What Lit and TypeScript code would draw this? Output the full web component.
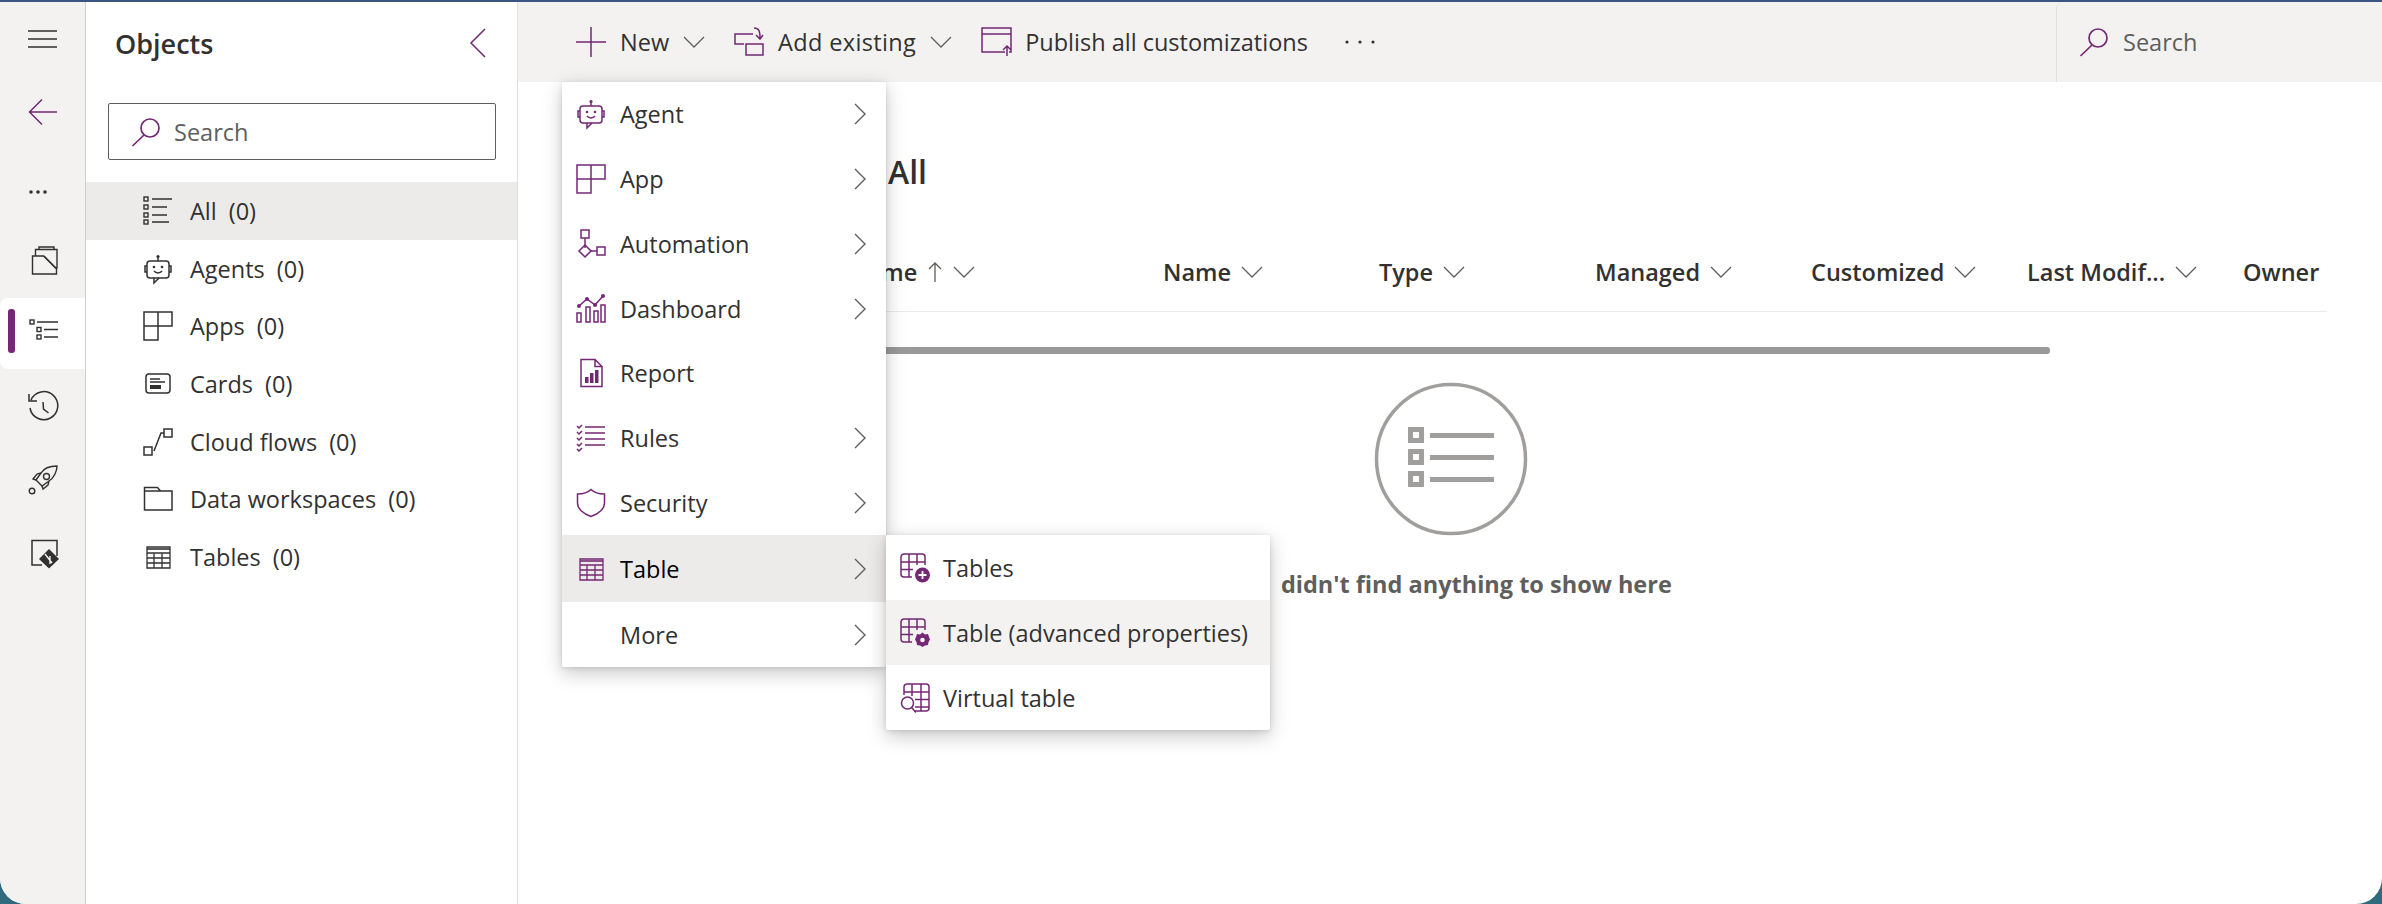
import { LitElement, html, css, svg } from 'lit';
import { customElement } from 'lit/decorators.js';

const P = '#742774';
const D = '#323130';

// every icon is drawn on a 30x30 box, stroke colour comes from currentColor
const icons: Record<string, unknown> = {
  hamburger: svg`<path d="M0 7h29M0 15h29M0 23h29" fill="none" stroke="currentColor" stroke-width="1.6"/>`,
  back: svg`<path d="M29 14H2M14 1.500 1.500 14 14 26.500" fill="none" stroke="currentColor" stroke-width="1.5"/>`,
  collapse: svg`<path d="M22 1 8 15l14 14" fill="none" stroke="currentColor" stroke-width="1.5"/>`,
  search: svg`<circle cx="19" cy="11" r="9" fill="none" stroke="currentColor" stroke-width="1.7"/><path d="M13 18 1.500 29" fill="none" stroke="currentColor" stroke-width="1.7"/>`,
  dots: svg`<circle cx="3" cy="15" r="1.8" fill="currentColor"/><circle cx="10" cy="15" r="1.8" fill="currentColor"/><circle cx="17" cy="15" r="1.8" fill="currentColor"/>`,
  dotsWide: svg`<circle cx="2" cy="15" r="1.6" fill="currentColor"/><circle cx="15" cy="15" r="1.6" fill="currentColor"/><circle cx="28" cy="15" r="1.6" fill="currentColor"/>`,
  solution: svg`<g fill="none" stroke="currentColor" stroke-width="1.400"><path d="M4.500 28V10h11l13 12.500V28ZM7.500 10V3.500h21.500v19M11 3.500V1h15v2.500"/><path d="M16 10l12 12.500"/></g>`,
  objects: svg`<g fill="none" stroke="currentColor" stroke-width="1.400"><rect x="2" y="1" width="4" height="4"/><rect x="9" y="8.500" width="4" height="4"/><rect x="9" y="16" width="4" height="4"/><path d="M9 3h21M16 10.500h14M16 18h14"/></g>`,
  history: svg`<path d="M3 9a14 14 0 1 1-1 8M1 3v7h8M15 11l.5 7 5 4" fill="none" stroke="currentColor" stroke-width="1.500"/>`,
  rocket: svg`<g fill="none" stroke="currentColor" stroke-width="1.400"><path d="M29 1c-6 0-13 2-16 7l-5 7 6 6 7-5c5-3 8-10 8-15Z"/><circle cx="18.500" cy="11.500" r="3"/><path d="M8 15l-3-1 4-5 4-1M14 21l1 3 5-4 1-4"/><circle cx="4" cy="26" r="2.800"/></g>`,
  git: svg`<path d="M29 17V1.500H4V26h10" fill="none" stroke="currentColor" stroke-width="1.500"/><path d="M21 10 31 20 21 29.500 11 20Z" fill="currentColor"/><path d="M17 15l7 9M22 17v8" stroke="#f3f2f1" stroke-width="1.400" fill="none"/>`,
  all: svg`<g fill="none" stroke="currentColor" stroke-width="1.400"><rect x="1" y="1" width="4" height="4"/><rect x="1" y="9" width="4" height="4"/><rect x="1" y="17" width="4" height="4"/><rect x="1" y="24" width="4" height="4"/><path d="M9 3h20M9 11h15M9 19h15M9 26h17"/></g>`,
  agent: svg`<g fill="none" stroke="currentColor" stroke-width="1.500"><rect x="4" y="7" width="22" height="17" rx="3"/><path d="M15 3v4M4 12H2v6h2M26 12h2v6h-2M11 24v5l5-5"/><path d="M11 17c2 2.500 6 2.500 8 0"/></g><circle cx="15" cy="2.500" r="1.600" fill="currentColor"/><circle cx="11" cy="13" r="1.300" fill="currentColor"/><circle cx="19" cy="13" r="1.300" fill="currentColor"/>`,
  apps: svg`<path d="M1 1h28v14H15v14H1ZM15 1v14M1 15h14" fill="none" stroke="currentColor" stroke-width="1.500"/>`,
  cards: svg`<rect x="3" y="5" width="24" height="19" rx="3" fill="none" stroke="currentColor" stroke-width="1.500"/><path d="M7 10h10M7 13h15" stroke="currentColor" stroke-width="1.300"/><rect x="7" y="16" width="11" height="4" fill="currentColor"/>`,
  flows: svg`<g fill="none" stroke="currentColor" stroke-width="1.500"><rect x="1" y="20" width="8" height="8"/><rect x="21" y="2" width="8" height="8"/><path d="M11 24 18 6h3"/></g>`,
  folder: svg`<path d="M1.500 3.500h13l3 3.500H29v19H1.500ZM1.500 7h16" fill="none" stroke="currentColor" stroke-width="1.500"/>`,
  table: svg`<path d="M4 5h23v21H4ZM4 11h23M4 16h23M4 21h23M11 11v15M19 11v15" fill="none" stroke="currentColor" stroke-width="1.300"/><path d="M4 7h23" stroke="currentColor" stroke-width="1.600"/>`,
  addExisting: svg`<g fill="none" stroke="currentColor" stroke-width="1.500"><path d="M10 17H1V7h18"/><rect x="12" y="17" width="17" height="11"/><path d="M20 1c5 0 6 3 6 10M22 8l4 4 3-4"/></g>`,
  plus: svg`<path d="M15 0v30M0 15h30" fill="none" stroke="currentColor" stroke-width="1.500"/>`,
  publish: svg`<g fill="none" stroke="currentColor" stroke-width="1.500"><path d="M24 25H1V1h29v24h-2M1 7h29M26 29V19M22 23l4-4 4 4"/></g>`,
  automation: svg`<g fill="none" stroke="currentColor" stroke-width="1.500"><rect x="5" y="1" width="8" height="8"/><path d="M9 9v10"/><path d="M9 19l6 6-6 6-6-6Z" transform="translate(0 -3)"/><path d="M15 22h6"/><rect x="21" y="18" width="8" height="8"/></g>`,
  dashboard: svg`<g fill="none" stroke="currentColor" stroke-width="1.500"><rect x="1" y="19" width="4" height="9"/><rect x="10" y="13" width="4" height="15"/><rect x="18" y="17" width="4" height="11"/><rect x="25" y="11" width="4" height="17"/><path d="M3 12 11 5l8 6 8-9"/></g><circle cx="3" cy="12" r="2" fill="currentColor"/><circle cx="11" cy="5" r="2" fill="currentColor"/><circle cx="19" cy="11" r="2" fill="currentColor"/><circle cx="27" cy="2" r="2" fill="currentColor"/>`,
  report: svg`<path d="M5 1.500h14l7 7v20H5ZM19 1.500v7h7" fill="none" stroke="currentColor" stroke-width="1.500"/><path d="M9 19h3.500v6H9ZM14 15h3.500v10H14ZM19 12h3.500v13H19Z" fill="currentColor"/>`,
  rules: svg`<path d="M9 4h20M9 10h20M9 16h20M9 22h20" fill="none" stroke="currentColor" stroke-width="1.500"/><path d="M1 3l2 2 3-3M1 9l2 2 3-3M1 15l2 2 3-3M1 21l2 2 3-3M1 26l2 2 3-3" fill="none" stroke="currentColor" stroke-width="1.500"/>`,
  shield: svg`<path d="M15 1.500c3 3 8 4.500 13.500 4.500v9c0 6-6 11-13.500 13.500C7.500 26 1.500 21 1.500 15V6C7 6 12 4.500 15 1.500Z" fill="none" stroke="currentColor" stroke-width="1.500"/>`,
  tableAdd: svg`<path d="M12 24H4a3 3 0 0 1-3-3V4a3 3 0 0 1 3-3h18a3 3 0 0 1 3 3v8M1 9h24M1 16.500h12M9 1v23M17 1v11" fill="none" stroke="currentColor" stroke-width="1.500"/><circle cx="22.500" cy="22" r="7.500" fill="currentColor"/><path d="M22.500 18v8M18.500 22h8" stroke="#fff" stroke-width="1.800"/>`,
  tableGear: svg`<path d="M12 24H4a3 3 0 0 1-3-3V4a3 3 0 0 1 3-3h18a3 3 0 0 1 3 3v8M1 9h24M1 16.500h12M9 1v23M17 1v11" fill="none" stroke="currentColor" stroke-width="1.500"/><path d="M22.500 14.500l2.500 2 3-.5 1 3 1 2.500-1.500 2.500-.5 3-3 .5-2.500 1.500-2.500-1.500-3-.5-.5-3L15 21.500 16 19l1-3 3 .5Z" fill="currentColor"/><circle cx="22.500" cy="22" r="2.300" fill="#f3f2f1"/>`,
  tableVirtual: svg`<path d="M4 12V4a3 3 0 0 1 3-3h19a3 3 0 0 1 3 3v21a3 3 0 0 1-3 3H14M4 9h25M15 16.500h14M15 24h14M12 1v12M21 1v27" fill="none" stroke="currentColor" stroke-width="1.500"/><circle cx="7.500" cy="20" r="6" fill="none" stroke="currentColor" stroke-width="1.500"/><path d="M11.500 24.500 16 29.500" stroke="currentColor" stroke-width="1.500"/>`,
};

const icon = (name: string, color: string, size = 30) => html`<svg
  width=${size}
  height=${size}
  viewBox="0 0 30 30"
  style="color:${color}"
  overflow="visible"
>${icons[name]}</svg>`;

const chevronDown = html`<svg class="chev" width="22" height="12" viewBox="0 0 22 12"><path d="M1 1l10 10L21 1" fill="none" stroke="#605e5c" stroke-width="1.300"/></svg>`;
const chevronRight = html`<svg width="12" height="22" viewBox="0 0 12 22"><path d="M1 1l10 10L1 21" fill="none" stroke="#605e5c" stroke-width="1.400"/></svg>`;
const arrowUp = html`<svg width="16" height="22" viewBox="0 0 16 22"><path d="M8 21V2M2 8l6-6 6 6" fill="none" stroke="#605e5c" stroke-width="1.300"/></svg>`;

const objects = [
  ['all', 'All'],
  ['agent', 'Agents'],
  ['apps', 'Apps'],
  ['cards', 'Cards'],
  ['flows', 'Cloud flows'],
  ['folder', 'Data workspaces'],
  ['table', 'Tables'],
];

const menu: [string, string, boolean][] = [
  ['agent', 'Agent', true],
  ['apps', 'App', true],
  ['automation', 'Automation', true],
  ['dashboard', 'Dashboard', true],
  ['report', 'Report', false],
  ['rules', 'Rules', true],
  ['shield', 'Security', true],
  ['table', 'Table', true],
  ['', 'More', true],
];

const columns = ['Name', 'Type', 'Managed', 'Customized'];

@customElement('app-root')
export class AppRoot extends LitElement {
  static styles = css`
    :host {
      display: block;
      width: 2382px;
      height: 904px;
      background: #2f6b7c;
      font-family: 'Open Sans', 'Noto Sans', sans-serif;
      font-size: 23.5px;
      color: #323130;
      overflow: hidden;
    }
    .shell {
      height: 904px;
      background: #fff;
      border-radius: 0 0 26px 26px;
      border-top: 2px solid #3b5580;
      box-sizing: border-box;
      display: flex;
      overflow: hidden;
    }
    .rail {
      width: 86px;
      flex: none;
      box-sizing: border-box;
      background: #f3f2f1;
      border-right: 1px solid #d2d0ce;
      display: flex;
      flex-direction: column;
    }
    .rail-btn {
      height: 74px;
      flex: none;
      display: flex;
      align-items: center;
      padding-left: 28px;
      position: relative;
    }
    .rail-btn.more {
      box-sizing: border-box;
      padding-top: 9px;
    }
    .rail-btn.active {
      height: 71px;
      background: #fff;
      border-radius: 8px 0 0 8px;
    }
    .rail-btn.active::before {
      content: '';
      position: absolute;
      left: 8px;
      top: 11px;
      width: 7px;
      height: 44px;
      border-radius: 3px;
      background: #742774;
    }
    .panel {
      width: 432px;
      flex: none;
      box-sizing: border-box;
      border-right: 1px solid #e1dfdd;
    }
    .panel-head {
      height: 82px;
      display: flex;
      align-items: center;
      justify-content: space-between;
      padding: 0 24px 2px 29px;
    }
    .panel-head h2 {
      margin: 0;
      font-size: 27px;
      font-weight: 600;
    }
    .panel-search {
      margin: 17px 21px 22px 22px;
      height: 57px;
      box-sizing: border-box;
      border: 1px solid #605e5c;
      border-radius: 2px;
      display: flex;
      align-items: center;
      gap: 13px;
      padding-left: 22px;
      color: #605e5c;
    }
    .obj {
      height: 57.7px;
      display: flex;
      align-items: center;
      gap: 17px;
      padding-left: 57px;
    }
    .obj.sel {
      background: #edebe9;
    }
    .obj .count {
      margin-left: 12px;
    }
    .main {
      flex: 1;
      min-width: 0;
      display: flex;
      flex-direction: column;
      position: relative;
    }
    .toolbar {
      height: 80px;
      flex: none;
      box-sizing: border-box;
      background: #f3f2f1;
      display: flex;
      align-items: center;
      padding-left: 58px;
    }
    .tool {
      display: flex;
      align-items: center;
      gap: 14px;
    }
    .tool.wide {
      letter-spacing: 0.35px;
    }
    .tool + .tool {
      margin-left: 29px;
    }
    .tool.overflow {
      margin-left: 37px;
    }
    .top-search {
      margin-left: auto;
      width: 326px;
      height: 80px;
      box-sizing: border-box;
      border-left: 1px solid #e1dfdd;
      border-radius: 6px 0 0 0;
      display: flex;
      align-items: center;
      gap: 14px;
      padding-left: 22px;
      color: #605e5c;
    }
    .content {
      flex: 1;
      padding-left: 240px;
      padding-right: 55px;
    }
    .content h1 {
      margin: 0 0 0 130px;
      padding-top: 67px;
      height: 80px;
      font-size: 32px;
      font-weight: 600;
      line-height: 46px;
    }
    .thead {
      height: 79px;
      margin-top: 3px;
      border-bottom: 1px solid #edebe9;
      display: flex;
      align-items: center;
      font-weight: 600;
    }
    .th {
      width: 216px;
      flex: none;
      display: flex;
      align-items: center;
      gap: 10px;
    }
    .th.first {
      width: 405px;
      box-sizing: border-box;
      padding-left: 6px;
    }
    .th.last {
      width: auto;
    }
    .scroll {
      margin: 35px 277px 0 0;
      height: 7px;
      border-radius: 3px;
      background: #999;
    }
    .empty {
      display: flex;
      flex-direction: column;
      align-items: center;
      position: absolute;
      left: 403px;
      top: 380px;
      width: 1060px;
    }
    .empty svg {
      display: block;
    }
    .empty p {
      margin: 32px 0 0 2px;
      font-weight: 700;
      color: #605e5c;
    }
    .empty .we {
      margin-right: 6px;
    }
    .menu {
      position: absolute;
      background: #fff;
      border-radius: 2px;
      box-shadow: 0 6px 20px rgba(0, 0, 0, 0.22), 0 1px 5px rgba(0, 0, 0, 0.12);
    }
    .menu.one {
      left: 44px;
      top: 80px;
      width: 324px;
    }
    .menu.two {
      left: 368px;
      top: 533px;
      width: 384px;
    }
    .item {
      height: 64.75px;
      box-sizing: border-box;
      display: flex;
      align-items: center;
      padding: 0 20px 0 14px;
    }
    .item .ic {
      width: 30px;
      height: 30px;
      flex: none;
      margin-right: 14px;
    }
    .item .lbl {
      flex: 1;
    }
    .item.open {
      background: #edebe9;
      height: 67px;
      color: #000;
    }
    .item.hover {
      background: #f3f2f1;
    }
    .menu.two .item {
      height: 65px;
    }
    .menu.two .item .ic {
      margin-right: 13px;
    }
  `;

  render() {
    return html`
      <div class="shell">
        <nav class="rail">
          <div class="rail-btn">${icon('hamburger', D)}</div>
          <div class="rail-btn">${icon('back', P)}</div>
          <div class="rail-btn more">${icon('dots', D)}</div>
          <div class="rail-btn">${icon('solution', D)}</div>
          <div class="rail-btn active">${icon('objects', D)}</div>
          <div class="rail-btn">${icon('history', D)}</div>
          <div class="rail-btn">${icon('rocket', D)}</div>
          <div class="rail-btn">${icon('git', D)}</div>
        </nav>
        <aside class="panel">
          <div class="panel-head">
            <h2>Objects</h2>
            ${icon('collapse', P)}
          </div>
          <div class="panel-search">${icon('search', P)}Search</div>
          ${objects.map(
            ([ic, label], i) => html`<div class="obj ${i === 0 ? 'sel' : ''}">
              ${icon(ic, D)}
              <span>${label}<span class="count">(0)</span></span>
            </div>`
          )}
        </aside>
        <section class="main">
          <div class="toolbar">
            <div class="tool">${icon('plus', P)}New ${chevronDown}</div>
            <div class="tool wide">${icon('addExisting', P)}Add existing ${chevronDown}</div>
            <div class="tool">${icon('publish', P)}Publish all customizations</div>
            <div class="tool overflow">${icon('dotsWide', D)}</div>
            <div class="top-search">${icon('search', P)}Search</div>
          </div>
          <div class="content">
            <h1>All</h1>
            <div class="thead">
              <div class="th first">Display name ${arrowUp} ${chevronDown}</div>
              ${columns.map((c) => html`<div class="th">${c} ${chevronDown}</div>`)}
              <div class="th">Last Modif... ${chevronDown}</div>
              <div class="th last">Owner</div>
            </div>
            <div class="scroll"></div>
          </div>
          <div class="empty">
            <svg width="154" height="154" viewBox="0 0 154 154">
              <circle cx="77" cy="77" r="74.500" fill="none" stroke="#a19f9d" stroke-width="3.500"/>
              <g fill="none" stroke="#a19f9d" stroke-width="5">
                <rect x="36.500" y="47.500" width="11" height="11"/>
                <rect x="36.500" y="69.500" width="11" height="11"/>
                <rect x="36.500" y="91.500" width="11" height="11"/>
                <path d="M56 53.500h64M56 75.500h64M56 97.500h64"/>
              </g>
            </svg>
            <p><span class="we">We</span> didn't find anything to show here</p>
          </div>
          <div class="menu one">
            ${menu.map(
              ([ic, label, sub]) => html`<div class="item ${label === 'Table' ? 'open' : ''}">
                <span class="ic">${ic ? icon(ic, P) : ''}</span>
                <span class="lbl">${label}</span>
                ${sub ? chevronRight : ''}
              </div>`
            )}
          </div>
          <div class="menu two">
            <div class="item"><span class="ic">${icon('tableAdd', P)}</span><span class="lbl">Tables</span></div>
            <div class="item hover"><span class="ic">${icon('tableGear', P)}</span><span class="lbl">Table (advanced properties)</span></div>
            <div class="item"><span class="ic">${icon('tableVirtual', P)}</span><span class="lbl">Virtual table</span></div>
          </div>
        </section>
      </div>
    `;
  }
}
